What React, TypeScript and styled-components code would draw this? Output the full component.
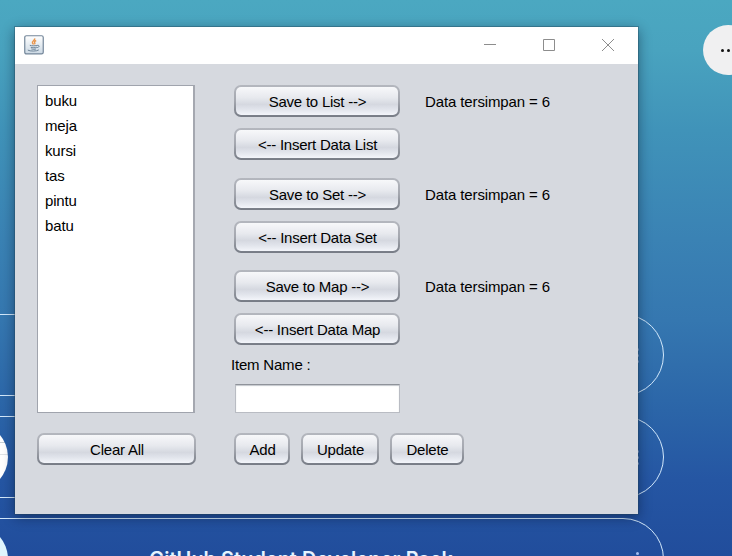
import React from "react";
import styled, { createGlobalStyle } from "styled-components";

const GlobalStyle = createGlobalStyle`
  * { box-sizing: border-box; }
  body { margin: 0; overflow: hidden; }
`;

const Desktop = styled.div`
  position: relative;
  width: 732px;
  height: 556px;
  overflow: hidden;
  background: linear-gradient(180deg, #4ba8c1 0, #49a3bf 50px, #4093b9 130px, #3a82b4 240px, #3577b0 320px, #2b65a8 410px, #2556a3 480px, #214d9c 556px);
  font-family: "Liberation Sans", Arial, sans-serif;
`;

const LinkStack = styled.div`
  position: absolute;
  top: 314px;
  left: -66px;
  width: 730px;
  display: flex;
  flex-direction: column;
  gap: 20px;
`;

const LinkPill = styled.div`
  height: 82px;
  flex: none;
  display: flex;
  align-items: center;
  padding: 0 24px 0 5px;
  border: 1px solid #d3e9fc;
  border-radius: 41px;
`;

const Avatar = styled.div<{ $fill: string }>`
  width: 68px;
  height: 68px;
  flex: none;
  border-radius: 50%;
  background: ${(p) => p.$fill};
`;

const LinkTitle = styled.div`
  flex: 1;
  text-align: center;
  font: 600 19.8px/24px Inter, sans-serif;
  letter-spacing: 0.1px;
  color: #e6f4ff;
  padding-right: 42px;
  white-space: nowrap;
`;

const PillDots = styled.div`
  width: 3px;
  margin-left: auto;
  display: grid;
  gap: 3px;
  flex: none;
  i { height: 3px; border-radius: 50%; background: #a3bdf0; }
`;

const MoreButton = styled.div`
  position: absolute;
  top: 25px;
  left: 703px;
  width: 50px;
  height: 50px;
  border-radius: 50%;
  background: #f0f0f1;
  display: flex;
  align-items: center;
  justify-content: center;
  gap: 3px;
  i { width: 3px; height: 3px; border-radius: 50%; background: #111; }
`;

const Window = styled.section`
  position: absolute;
  left: 15px;
  top: 27px;
  width: 623px;
  height: 487px;
  background: #d6d9df;
  box-shadow: 0 0 0 1px rgba(35, 65, 85, 0.35), 0 3px 12px rgba(0, 15, 35, 0.48);
`;

const TitleBar = styled.header`
  height: 37px;
  background: #fff;
  display: flex;
  align-items: center;
  justify-content: space-between;
  padding: 0 23px 1px 9px;
`;

const Controls = styled.div`
  display: flex;
  gap: 45px;
  height: 14px;
  svg { display: block; fill: none; stroke: #8d8d8d; }
`;

const Content = styled.div`
  display: flex;
  padding: 21px 0 0 22px;
  gap: 39px;
  font-size: 15px;
  color: #000;
`;

const ListColumn = styled.div`
  width: 158px;
  display: flex;
  flex-direction: column;
  gap: 20px;
`;

const ItemList = styled.ul`
  margin: 0;
  padding: 2px 7px;
  width: 158px;
  height: 328px;
  list-style: none;
  letter-spacing: -0.15px;
  background: #fff;
  border: 1px solid #a0a4ad;
  border-right: 2px solid #a5a8b0;
  li { height: 25px; line-height: 25px; }
`;

const FormColumn = styled.div`
  display: flex;
  flex-direction: column;
`;

const ButtonGroup = styled.div<{ $gap: number }>`
  display: grid;
  grid-template-columns: 166px auto;
  column-gap: 25px;
  row-gap: 11px;
  margin-bottom: ${(p) => p.$gap}px;
`;

const Button = styled.button<{ $width: number }>`
  width: ${(p) => p.$width}px;
  height: 32px;
  padding: 1px 0 0 1px;
  border: 2px solid transparent;
  border-radius: 7px;
  background:
    linear-gradient(180deg, #f7f8fa 0, #e7e9ee 38%, #d5d8e0 62%, #e3e6ed 82%, #f3f5fa 100%) padding-box,
    linear-gradient(180deg, #b4b7be 0, #a4a7af 50%, #767b85 100%) border-box;
  font: 15px/18px "Liberation Sans", Arial, sans-serif;
  letter-spacing: -0.23px;
  color: #000;
  white-space: nowrap;
`;

const Status = styled.span`
  line-height: 34px;
  height: 32px;
  letter-spacing: -0.12px;
  white-space: nowrap;
`;

const FieldLabel = styled.label`
  height: 20px;
  margin: -7px 0 9px -3px;
  line-height: 20px;
  letter-spacing: -0.2px;
`;

const Field = styled.input`
  width: 165px;
  height: 29px;
  margin: 0 0 20px 1px;
  border: 1px solid #b9bcc3;
  border-top: 1px solid #8f939a;
  background: #fff;
  box-shadow: inset 0 1px 1px #c4c7cc;
`;

const Actions = styled.div`
  display: flex;
  gap: 11px;
`;

const items = ["buku", "meja", "kursi", "tas", "pintu", "batu"];
const stores = [
  { name: "List", gap: 18 },
  { name: "Set", gap: 17 },
  { name: "Map", gap: 17 },
];

function JavaIcon() {
  return (
    <svg width="20" height="20" viewBox="0 0 20 20" fill="none">
      <defs>
        <linearGradient id="tile" x1="0" y1="0" x2="0" y2="1">
          <stop stopColor="#fff" />
          <stop offset="1" stopColor="#cbd8e3" />
        </linearGradient>
      </defs>
      <rect x=".75" y=".75" width="18.5" height="18.2" rx="1.7" fill="url(#tile)" stroke="#74879a" strokeWidth="1.2" />
      <path d="M10.7 3.4c.6 2-3.4 2.8-2.2 4.6.3.6.8.9 1 1.4M12.2 5.5c-1.8.8-2.2 1.4-1.4 2.4.4.6 0 1-.4 1.4" stroke="#e9954b" strokeWidth="1.4" />
      <path d="M5.8 10.3c1.7.7 6.3.7 8 0M6.7 12.2c1.5.7 4.7.7 6.2 0M7.3 13.9c1.4.5 3.6.5 4.8 0M13.7 10.4c2.3-.2 1.7 1.8-.5 2.2M3.8 15.1c2.1 1.4 9.3 1.2 11-.2" stroke="#6d8498" strokeWidth="1" />
    </svg>
  );
}

function WindowControls() {
  return (
    <Controls>
      <svg width="14" height="14"><path d="M1 6.5h12" /></svg>
      <svg width="14" height="14"><path d="M1.5 1.5h11v11h-11z" /></svg>
      <svg width="14" height="14"><path d="m1 1 12 12M13 1 1 13" /></svg>
    </Controls>
  );
}

const Dots = () => <PillDots><i /><i /><i /></PillDots>;

export default function App() {
  return (
    <>
      <GlobalStyle />
      <Desktop>
        <LinkStack>
          <LinkPill><Dots /></LinkPill>
          <LinkPill><Avatar $fill="linear-gradient(#fff 0 19px, #c9d1d6 19px 20px, #fff 20px 31px, #dfe3e6 31px 32px, #fff 32px)" /><Dots /></LinkPill>
          <LinkPill><Avatar $fill="#dff5fd" /><LinkTitle>GitHub Student Developer Pack</LinkTitle><Dots /></LinkPill>
        </LinkStack>
        <MoreButton><i /><i /><i /></MoreButton>
        <Window>
          <TitleBar><JavaIcon /><WindowControls /></TitleBar>
          <Content>
            <ListColumn>
              <ItemList>{items.map((item) => <li key={item}>{item}</li>)}</ItemList>
              <Button $width={159}>Clear All</Button>
            </ListColumn>
            <FormColumn>
              {stores.map(({ name, gap }) => (
                <ButtonGroup key={name} $gap={gap}>
                  <Button $width={166}>Save to {name} --&gt;</Button>
                  <Status>Data tersimpan = 6</Status>
                  <Button $width={166}>&lt;-- Insert Data {name}</Button>
                </ButtonGroup>
              ))}
              <FieldLabel htmlFor="item-name">Item Name :</FieldLabel>
              <Field id="item-name" />
              <Actions>
                <Button $width={56}>Add</Button>
                <Button $width={78}>Update</Button>
                <Button $width={74}>Delete</Button>
              </Actions>
            </FormColumn>
          </Content>
        </Window>
      </Desktop>
    </>
  );
}
